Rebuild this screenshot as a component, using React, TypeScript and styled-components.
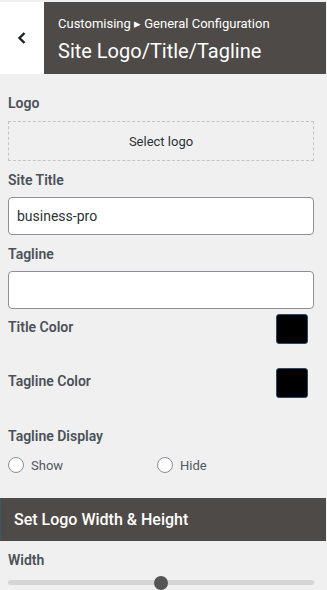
import React from "react";
import styled, { createGlobalStyle } from "styled-components";

const Global = createGlobalStyle`
  html, body { margin: 0; padding: 0; background: #f0f0f1; }
  body { font-family: Roboto, "Noto Sans", Arial, sans-serif; }
  * { box-sizing: border-box; }
`;

const Page = styled.div`
  background: #f0f0f1;
  padding-top: 2px;
  padding-right: 1px;
  min-height: 590px;
`;

const Header = styled.header`
  display: flex;
  height: 72px;
`;

const BackButton = styled.button`
  width: 44px;
  flex: none;
  border: none;
  background: #fff;
  display: flex;
  align-items: center;
  justify-content: center;
  padding: 0;
  color: #1d2327;
`;

const HeaderText = styled.div`
  flex: 1;
  background: #4e4a47;
  color: #fff;
  padding: 14px 0 0 14px;
`;

const Crumb = styled.div`
  font-size: 13px;
  line-height: 16px;
`;

const Title = styled.div`
  font-size: 20px;
  line-height: 24px;
  margin-top: 7px;
`;

const Content = styled.div`
  padding: 0 12px 0 8px;
`;

const Label = styled.div<{ $mt: number }>`
  font-size: 14px;
  font-weight: 600;
  color: #4b5158;
  line-height: 17px;
  margin-top: ${(p) => p.$mt}px;
`;

const SelectBox = styled.div`
  margin-top: 9px;
  height: 40px;
  border: 1px dashed #c3c4c7;
  display: flex;
  align-items: center;
  justify-content: center;
  font-size: 13px;
  color: #2c3338;
`;

const Input = styled.div`
  margin-top: 8px;
  height: 38px;
  border: 1px solid #8c8f94;
  border-radius: 4px;
  background: #fff;
  padding: 0 8px;
  display: flex;
  align-items: center;
  font-size: 14px;
  color: #2c3338;
`;

const ColorRow = styled.div<{ $mt: number }>`
  display: flex;
  align-items: center;
  justify-content: space-between;
  margin-top: ${(p) => p.$mt}px;
  height: 30px;
`;

const RowLabel = styled.div`
  font-size: 14px;
  font-weight: 600;
  color: #4b5158;
  line-height: 17px;
  margin-top: -4px;
`;

const Swatch = styled.div<{ $color: string }>`
  width: 32px;
  height: 30px;
  margin-right: 6px;
  border-radius: 3px;
  background: ${(p) => p.$color};
  border: 1px solid #2c4a66;
`;

const RadioGroup = styled.div`
  display: flex;
  margin-top: 12px;
`;

const RadioOption = styled.label`
  display: flex;
  align-items: center;
  width: 149px;
  font-size: 13px;
  color: #50575e;
`;

const RadioCircle = styled.span`
  width: 16px;
  height: 16px;
  border-radius: 50%;
  border: 1px solid #8c8f94;
  background: #fff;
  margin-right: 7px;
  flex: none;
`;

const SectionBand = styled.div`
  margin-top: 25px;
  height: 43px;
  background: #4e4a47;
  border-left: 1px solid #3a5866;
  color: #fff;
  font-size: 16px;
  font-weight: 500;
  display: flex;
  align-items: center;
  padding-left: 13px;
`;

const SliderTrack = styled.div`
  position: relative;
  margin-top: 11px;
  height: 5px;
  border-radius: 3px;
  background: #d6d6d6;
`;

const SliderThumb = styled.div`
  position: absolute;
  top: 50%;
  width: 14px;
  height: 14px;
  margin: -7px 0 0 -7px;
  border-radius: 50%;
  background: #555;
`;

export default function App() {
  const widthPct = 50;
  return (
    <Page>
      <Global />
      <Header>
        <BackButton aria-label="Back">
          <svg width="12" height="14" viewBox="0 0 12 14">
            <path d="M8.5 2 L3.5 7 L8.5 12" fill="none" stroke="#1d2327" strokeWidth="2.4" />
          </svg>
        </BackButton>
        <HeaderText>
          <Crumb>Customising ▸ General Configuration</Crumb>
          <Title>Site Logo/Title/Tagline</Title>
        </HeaderText>
      </Header>
      <Content>
        <Label $mt={21}>Logo</Label>
        <SelectBox>Select logo</SelectBox>
        <Label $mt={11}>Site Title</Label>
        <Input>business-pro</Input>
        <Label $mt={11}>Tagline</Label>
        <Input />
        <ColorRow $mt={5}>
          <RowLabel>Title Color</RowLabel>
          <Swatch $color="#000" />
        </ColorRow>
        <ColorRow $mt={24}>
          <RowLabel>Tagline Color</RowLabel>
          <Swatch $color="#000" />
        </ColorRow>
        <Label $mt={30}>Tagline Display</Label>
        <RadioGroup>
          <RadioOption>
            <RadioCircle />
            Show
          </RadioOption>
          <RadioOption>
            <RadioCircle />
            Hide
          </RadioOption>
        </RadioGroup>
      </Content>
      <SectionBand>Set Logo Width &amp; Height</SectionBand>
      <Content>
        <Label $mt={11}>Width</Label>
        <SliderTrack>
          <SliderThumb style={{ left: `${widthPct}%` }} />
        </SliderTrack>
      </Content>
    </Page>
  );
}
